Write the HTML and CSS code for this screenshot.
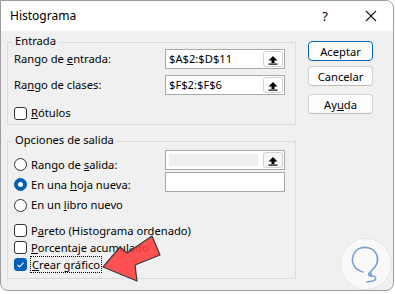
FILE: index.html
```html
<!DOCTYPE html>
<html lang="es">
<head>
    <meta charset="UTF-8">
    <meta name="viewport" content="width=device-width, initial-scale=1.0">
    <title>Histograma</title>
    <link rel="stylesheet" href="styles.css">
</head>
<body>
    <div class="window">
        <div class="titlebar">
            <span class="title">Histograma</span>
            <span class="help">?</span>
            <svg class="close" width="12" height="12" viewBox="0 0 12 12">
                <path d="M1 1 L11 11 M11 1 L1 11" stroke="#1a1a1a" stroke-width="1.1" fill="none"/>
            </svg>
        </div>
        <div class="content">
            <div class="main">
                <div class="group group-in">
                    <div class="legend">Entrada</div>
                    <div class="row field first">
                        <span class="label">Rango de <u>e</u>ntrada:</span>
                        <div class="ref"><span class="val">$A$2:$D$11</span><span class="pick"><svg width="20" height="16" viewBox="0 0 20 16"><path d="M10 5 L14.5 9.5 L11.5 9.5 L11.5 12 L8.5 12 L8.5 9.5 L5.5 9.5 Z" fill="#000"/><rect x="5.5" y="12.5" width="9" height="1.2" fill="#000"/></svg></span></div>
                    </div>
                    <div class="row field second">
                        <span class="label">Ra<u>n</u>go de clases:</span>
                        <div class="ref"><span class="val">$F$2:$F$6</span><span class="pick"><svg width="20" height="16" viewBox="0 0 20 16"><path d="M10 5 L14.5 9.5 L11.5 9.5 L11.5 12 L8.5 12 L8.5 9.5 L5.5 9.5 Z" fill="#000"/><rect x="5.5" y="12.5" width="9" height="1.2" fill="#000"/></svg></span></div>
                    </div>
                    <div class="row opt labels">
                        <span class="box"></span><span><u>R</u>ótulos</span>
                    </div>
                </div>

                <div class="group group-out">
                    <div class="legend">Opciones de salida</div>
                    <div class="row opt out-a">
                        <span class="radio"></span><span class="label short">Rango de <u>s</u>alida:</span>
                        <div class="ref disabled"><span class="fill"></span><span class="pick"><svg width="20" height="16" viewBox="0 0 20 16"><path d="M10 5 L14.5 9.5 L11.5 9.5 L11.5 12 L8.5 12 L8.5 9.5 L5.5 9.5 Z" fill="#000"/><rect x="5.5" y="12.5" width="9" height="1.2" fill="#000"/></svg></span></div>
                    </div>
                    <div class="row opt out-b">
                        <span class="radio on"></span><span class="label short">En una <u>h</u>oja nueva:</span>
                        <div class="ref empty"></div>
                    </div>
                    <div class="row opt">
                        <span class="radio"></span><span>En un <u>l</u>ibro nuevo</span>
                    </div>
                    <div class="row opt check first-check">
                        <span class="box"></span><span>P<u>a</u>reto (Histograma ordenado)</span>
                    </div>
                    <div class="row opt check">
                        <span class="box"></span><span><u>P</u>orcentaje acumulado</span>
                    </div>
                    <div class="row opt check">
                        <span class="box on"><svg width="13" height="13" viewBox="0 0 13 13"><path d="M3.5 6.8 L5.6 8.8 L9.5 4.6" stroke="#fff" stroke-width="1.1" fill="none"/></svg></span><span class="focus"><u>C</u>rear gráfico</span>
                    </div>
                </div>
            </div>

            <div class="buttons">
                <button class="btn default">Aceptar</button>
                <button class="btn">Cancelar</button>
                <button class="btn help-btn">Ay<u>u</u>da</button>
            </div>
        </div>

        <svg class="arrow" width="395" height="294" viewBox="0 0 395 294">
            <polygon points="103,267 120,247 127,253 152,236 160,255 135,265 137,281" fill="#ff3b3b" fill-opacity="0.88" stroke="#3a3a3a" stroke-width="1.2" stroke-linejoin="round"/>
        </svg>

        <div class="badge">
            <svg width="50" height="50" viewBox="0 0 50 50">
                <path d="M22 33 C14 31 10 24 12 17 C14 10 21 7 28 9 C35 11 38 18 36 24 C35 28 32 30 30 32 C29 34 30 36 31 37 C34 37 36 39 34 41 C32 43 28 42 26 43 M28 34 C27 36 28 37 30 37" stroke="#7b9dd0" stroke-width="1.6" fill="none" stroke-linecap="round"/>
            </svg>
        </div>
    </div>
</body>
</html>
```

FILE: styles.css
```css
body {
    margin: 0;
    background: #fff;
    font-family: "Noto Sans", Arial, sans-serif;
    font-size: 11.2px;
    line-height: 16px;
    color: #000;
}

.window {
    position: relative;
    width: 394px;
    height: 291px;
    box-sizing: border-box;
    border: 1px solid #9c9c9c;
    border-radius: 0 8px 8px 8px;
    background: #f0f0f0;
    overflow: hidden;
}

.titlebar {
    height: 30px;
    background: #fff;
    display: flex;
    align-items: center;
}

.title {
    margin-left: 9px;
    font-size: 12px;
    flex: 1;
}

.help {
    font-size: 13px;
    margin-right: 37px;
}

.close {
    margin-right: 16px;
}

.content {
    display: flex;
    padding-left: 6px;
}

.main {
    width: 289px;
}

.group {
    border: 1px solid #dcdcdc;
    margin-top: 11px;
}

.group-out {
    margin-top: 16px;
    padding-bottom: 5px;
}

.group-in {
    padding-bottom: 1px;
}

.legend {
    width: fit-content;
    margin: -10px 0 0 5px;
    padding: 0 2px;
    height: 16px;
    background: #f0f0f0;
}

.row {
    display: flex;
    align-items: center;
    height: 20px;
    padding-left: 6px;
}

.field .label {
    width: 151px;
}

.field.second {
    margin-top: 6px;
}

.opt.labels {
    margin-top: 8px;
}

.ref {
    width: 120px;
    height: 20px;
    box-sizing: border-box;
    border: 1px solid #a8a8a8;
    background: #fff;
    display: flex;
    align-items: center;
}

.val {
    flex: 1;
    padding-left: 3px;
}

.pick {
    width: 20px;
    height: 16px;
    box-sizing: border-box;
    border: 1px solid #d2d2d2;
    border-radius: 3px;
    background: #fff;
    display: flex;
    margin-right: 1px;
}

.pick svg {
    margin: -1px;
}

.disabled .fill {
    flex: 1;
    height: 12px;
    margin: 0 5px 0 3px;
    background: #f0f0f0;
}

.disabled .pick {
    background: #f7f7f7;
}

.box,
.radio {
    width: 13px;
    height: 13px;
    box-sizing: border-box;
    border: 1px solid #333;
    background: #fff;
    margin-right: 4px;
    flex: none;
}

.box {
    border-radius: 3px;
}

.box.on {
    background: #005fb8;
    border-color: #005fb8;
    display: flex;
}

.box.on svg {
    margin: -1px;
}

.radio {
    border-radius: 50%;
}

.radio.on {
    background: #005fb8;
    border-color: #005fb8;
    display: flex;
    align-items: center;
    justify-content: center;
}

.radio.on::after {
    content: "";
    width: 5px;
    height: 5px;
    border-radius: 50%;
    background: #fff;
}

.opt.out-a,
.opt.out-b {
    align-items: flex-start;
}

.out-a {
    margin-top: 7px;
}

.out-a .radio,
.out-b .radio {
    margin-top: 3px;
}

.out-a .label,
.out-b .label {
    line-height: 20px;
}

.label.short {
    width: 134px;
}

.out-a .ref {
    margin-top: -5px;
}

.out-b .ref {
    margin-top: -3px;
}

.check {
    height: 17px;
}

.first-check {
    margin-top: 7px;
}

.focus {
    outline: 1px dotted #000;
    outline-offset: 0;
    padding: 0 1px;
    line-height: 15px;
}

.buttons {
    display: flex;
    flex-direction: column;
    margin: 10px 0 0 12px;
}

.btn {
    width: 65px;
    height: 20px;
    padding: 0;
    font-family: inherit;
    font-size: 11.2px;
    color: #000;
    background: #fdfdfd;
    border: 1px solid #d0d0d0;
    border-bottom-color: #bdbdbd;
    border-radius: 4px;
    margin-bottom: 5px;
}

.btn.default {
    border-color: #0067c0;
}

.help-btn {
    margin-top: 3px;
}

.arrow {
    position: absolute;
    left: -1px;
    top: -1px;
}

.badge {
    position: absolute;
    left: 339px;
    top: 237px;
    width: 50px;
    height: 50px;
    border-radius: 50%;
    background: #f9f9f9;
    border: 1px solid #e4e4e4;
}
```
